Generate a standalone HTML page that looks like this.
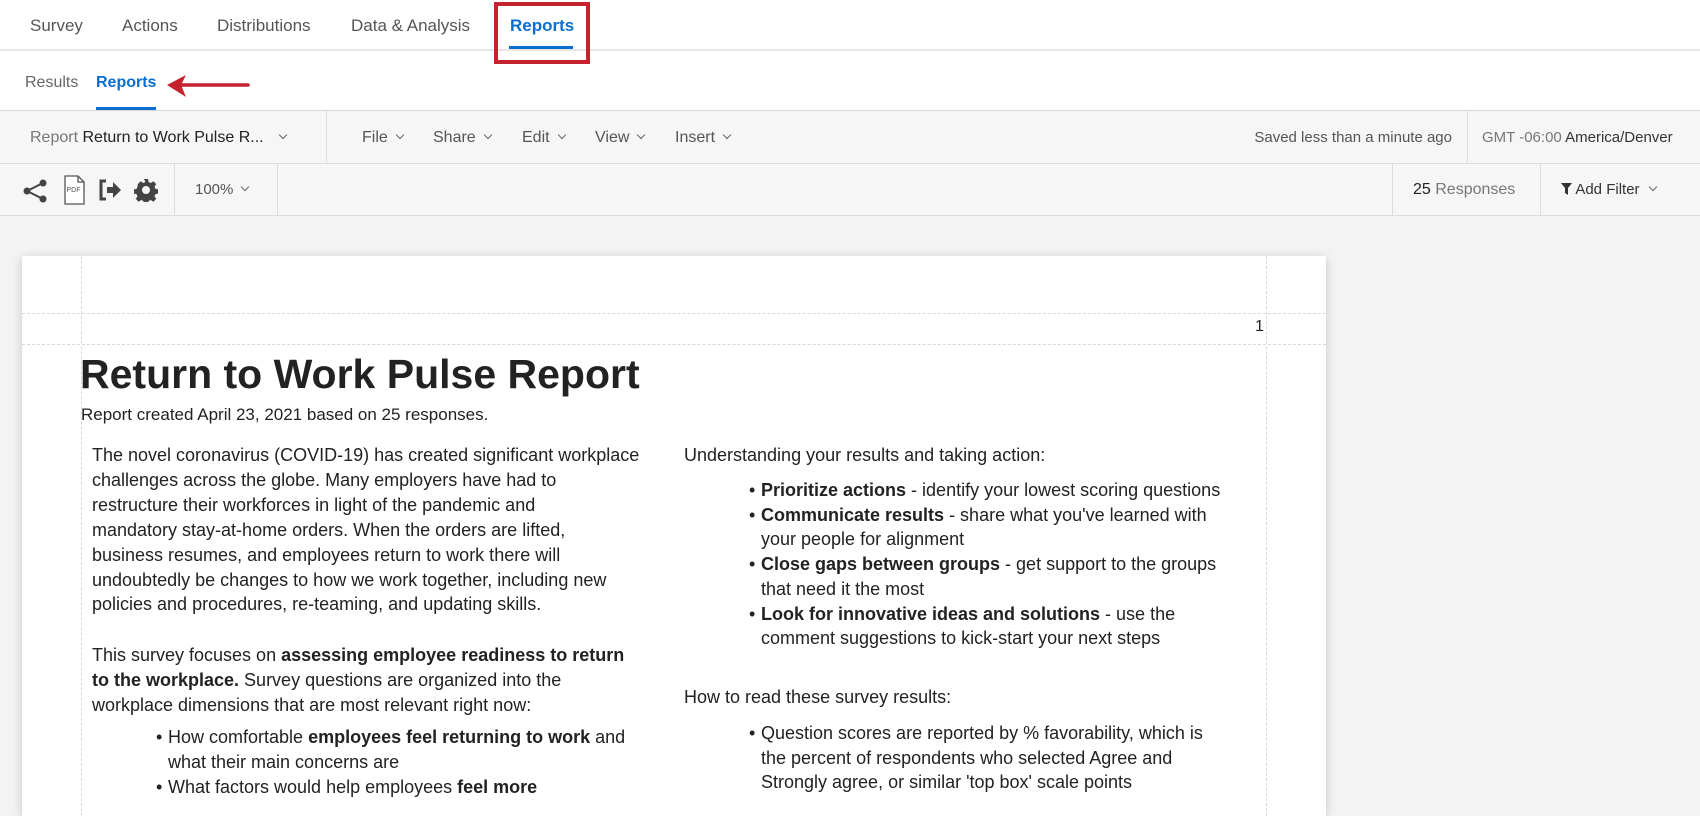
<!DOCTYPE html>
<html><head><meta charset="utf-8"><style>
*{margin:0;padding:0;box-sizing:border-box}
body{width:1700px;height:790px;overflow:hidden;background:#f3f3f3;font-family:"Liberation Sans",sans-serif;position:relative;color:#333}
.a{position:absolute;white-space:nowrap}
.nav{position:absolute;left:0;top:0;width:1700px;height:51px;background:#fff;border-bottom:2px solid #e6e6e6}
.nav span{position:absolute;top:16px;font-size:17px;color:#555}
.sub{position:absolute;left:0;top:51px;width:1700px;height:60px;background:#fff;border-bottom:1px solid #d6d6d6}
.tb1{position:absolute;left:0;top:111px;width:1700px;height:53px;background:#f6f6f6;border-bottom:1px solid #dcdcdc}
.tb2{position:absolute;left:0;top:164px;width:1700px;height:52px;background:#f6f6f6;border-bottom:1px solid #dcdcdc}
.vd{position:absolute;top:0;bottom:0;width:1px;background:#dcdcdc}
.t{font-size:16px;color:#555;position:absolute;white-space:nowrap}
.chev{display:inline-block;width:6px;height:6px;border-right:1.5px solid #666;border-bottom:1.5px solid #666;transform:rotate(45deg);margin-left:9px;position:relative;top:-4px}
.card{position:absolute;left:22px;top:256px;width:1304px;height:560px;background:#fff;box-shadow:0 2px 10px rgba(0,0,0,.18)}
.l{position:absolute;white-space:nowrap;font-size:18px;line-height:24px;color:#222}
b{font-weight:bold}
.dot{position:absolute;font-size:18px;line-height:24px;color:#222}
</style></head><body>
<div class="nav">
<span style="left:30px">Survey</span>
<span style="left:122px">Actions</span>
<span style="left:217px">Distributions</span>
<span style="left:351px">Data &amp; Analysis</span>
<span style="left:510px;color:#0b6ed0;font-weight:bold">Reports</span>
<div class="a" style="left:509px;top:46px;width:64px;height:3px;background:#0b6ed0"></div>
</div>
<div class="sub">
<span class="a" style="left:25px;top:23px;font-size:16px;color:#666">Results</span>
<span class="a" style="left:96px;top:23px;font-size:16px;color:#0b6ed0;font-weight:bold">Reports</span>
<div class="a" style="left:96px;top:56px;width:60px;height:3px;background:#0b6ed0"></div>
<svg class="a" style="left:164px;top:20px" width="90" height="30"><path d="M16 14 H84" stroke="#c3222f" stroke-width="3.5" stroke-linecap="round"/><path d="M3 14 L22 4 L17 14 L22 26 Z" fill="#c3222f"/></svg>
</div>
<div class="a" style="left:494px;top:2px;width:96px;height:62px;border:4px solid #c3222f;z-index:5"></div>
<div class="tb1">
<div class="t" style="left:30px;top:18px"><span style="color:#777">Report</span> <span style="color:#222">Return to Work Pulse R...</span><span class="chev" style="margin-left:16px"></span></div>
<div class="vd" style="left:326px"></div>
<div class="t" style="left:362px;top:18px">File<span class="chev"></span></div>
<div class="t" style="left:433px;top:18px">Share<span class="chev"></span></div>
<div class="t" style="left:522px;top:18px">Edit<span class="chev"></span></div>
<div class="t" style="left:595px;top:18px">View<span class="chev"></span></div>
<div class="t" style="left:675px;top:18px">Insert<span class="chev"></span></div>
<div class="t" style="right:248px;top:18px;font-size:15px">Saved less than a minute ago</div>
<div class="vd" style="left:1467px"></div>
<div class="t" style="left:1482px;top:18px;font-size:15px"><span style="color:#777">GMT -06:00</span> <span style="color:#333">America/Denver</span></div>
</div>
<div class="tb2">
<svg class="a" style="left:22px;top:14px" width="28" height="26"><circle cx="21" cy="5" r="3.5" fill="#444"/><circle cx="5" cy="13" r="3.5" fill="#444"/><circle cx="21" cy="21" r="3.5" fill="#444"/><path d="M21 5 L5 13 L21 21" stroke="#444" stroke-width="2" fill="none"/></svg>
<svg class="a" style="left:63px;top:11px" width="24" height="30"><path d="M2 1 H15 L21 7 V29 H2 Z" fill="#fff" stroke="#555" stroke-width="1.3"/><path d="M15 1 V7 H21" fill="none" stroke="#555" stroke-width="1.3"/><text x="3.5" y="17" font-size="7" fill="#555" font-family="Liberation Sans">PDF</text></svg>
<svg class="a" style="left:99px;top:15px" width="24" height="22"><path d="M7 2 H2 V20 H7" stroke="#444" stroke-width="3" fill="none"/><path d="M8 8 H14 V3 L22 11 L14 19 V14 H8 Z" fill="#444"/></svg>
<svg class="a" style="left:134px;top:14px" width="24" height="24" viewBox="0 0 24 24"><path fill="#444" d="M12 8a4 4 0 1 0 0 8a4 4 0 1 0 0-8zM10 1h4l.6 3 2.2 1 2.6-1.7 2.8 2.8-1.7 2.6 1 2.2 3 .6v4l-3 .6-1 2.2 1.7 2.6-2.8 2.8-2.6-1.7-2.2 1-.6 3h-4l-.6-3-2.2-1-2.6 1.7-2.8-2.8 1.7-2.6-1-2.2-3-.6v-4l3-.6 1-2.2L3.8 6.1l2.8-2.8 2.6 1.7 2.2-1z" fill-rule="evenodd"/><circle cx="12" cy="12" r="3" fill="#f6f6f6"/></svg>
<div class="vd" style="left:174px"></div>
<div class="t" style="left:195px;top:17px;font-size:15px">100%<span class="chev"></span></div>
<div class="vd" style="left:277px"></div>
<div class="vd" style="left:1392px"></div>
<div class="t" style="left:1413px;top:17px"><span style="color:#222">25</span> <span style="color:#777">Responses</span></div>
<div class="vd" style="left:1540px"></div>
<div class="t" style="left:1561px;top:17px;font-size:15px;color:#333"><svg width="11" height="13" style="vertical-align:-1px"><path d="M0 1 H11 L7 6 V13 L4 11 V6 Z" fill="#333"/></svg> Add Filter<span class="chev" style="margin-left:10px"></span></div>
</div>
<div class="card"></div>
<div class="a" style="left:81px;top:256px;width:0;height:560px;border-left:1px dashed #d8d8d8"></div>
<div class="a" style="left:1266px;top:256px;width:0;height:560px;border-left:1px dashed #d8d8d8"></div>
<div class="a" style="left:22px;top:313px;width:1304px;border-top:1px dashed #d8d8d8"></div>
<div class="a" style="left:22px;top:344px;width:1304px;border-top:1px dashed #d8d8d8"></div>
<div class="l" style="left:1255px;top:315px;font-size:16px">1</div>
<div class="l" style="left:80px;top:350px;font-size:41px;line-height:48px;font-weight:bold;color:#222">Return to Work Pulse Report</div>
<div class="l" style="left:81px;top:403px;font-size:17px">Report created April 23, 2021 based on 25 responses.</div>

<div class="l" style="left:92px;top:443px">The novel coronavirus (COVID-19) has created significant workplace</div>
<div class="l" style="left:92px;top:468px">challenges across the globe. Many employers have had to</div>
<div class="l" style="left:92px;top:493px">restructure their workforces in light of the pandemic and</div>
<div class="l" style="left:92px;top:518px">mandatory stay-at-home orders. When the orders are lifted,</div>
<div class="l" style="left:92px;top:543px">business resumes, and employees return to work there will</div>
<div class="l" style="left:92px;top:568px">undoubtedly be changes to how we work together, including new</div>
<div class="l" style="left:92px;top:592px">policies and procedures, re-teaming, and updating skills.</div>
<div class="l" style="left:92px;top:643px">This survey focuses on <b>assessing employee readiness to return</b></div>
<div class="l" style="left:92px;top:668px"><b>to the workplace.</b> Survey questions are organized into the</div>
<div class="l" style="left:92px;top:693px">workplace dimensions that are most relevant right now:</div>
<div class="dot" style="left:156px;top:725px">•</div>
<div class="l" style="left:168px;top:725px">How comfortable <b>employees feel returning to work</b> and</div>
<div class="l" style="left:168px;top:750px">what their main concerns are</div>
<div class="dot" style="left:156px;top:775px">•</div>
<div class="l" style="left:168px;top:775px">What factors would help employees <b>feel more</b></div>

<div class="l" style="left:684px;top:443px">Understanding your results and taking action:</div>
<div class="dot" style="left:749px;top:478px">•</div>
<div class="l" style="left:761px;top:478px"><b>Prioritize actions</b> - identify your lowest scoring questions</div>
<div class="dot" style="left:749px;top:503px">•</div>
<div class="l" style="left:761px;top:503px"><b>Communicate results</b> - share what you've learned with</div>
<div class="l" style="left:761px;top:527px">your people for alignment</div>
<div class="dot" style="left:749px;top:552px">•</div>
<div class="l" style="left:761px;top:552px"><b>Close gaps between groups</b> - get support to the groups</div>
<div class="l" style="left:761px;top:577px">that need it the most</div>
<div class="dot" style="left:749px;top:602px">•</div>
<div class="l" style="left:761px;top:602px"><b>Look for innovative ideas and solutions</b> - use the</div>
<div class="l" style="left:761px;top:626px">comment suggestions to kick-start your next steps</div>
<div class="l" style="left:684px;top:685px">How to read these survey results:</div>
<div class="dot" style="left:749px;top:721px">•</div>
<div class="l" style="left:761px;top:721px">Question scores are reported by % favorability, which is</div>
<div class="l" style="left:761px;top:746px">the percent of respondents who selected Agree and</div>
<div class="l" style="left:761px;top:770px">Strongly agree, or similar 'top box' scale points</div>
</body></html>
